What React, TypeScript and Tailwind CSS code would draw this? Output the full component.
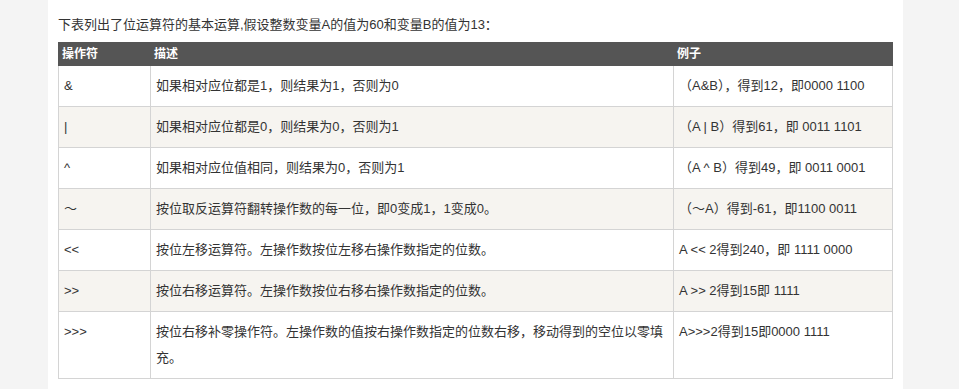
const rows: [string, string, string][] = [
  ["&", "如果相对应位都是1，则结果为1，否则为0", "（A&B），得到12，即0000 1100"],
  ["|", "如果相对应位都是0，则结果为0，否则为1", "（A | B）得到61，即 0011 1101"],
  ["^", "如果相对应位值相同，则结果为0，否则为1", "（A ^ B）得到49，即 0011 0001"],
  ["〜", "按位取反运算符翻转操作数的每一位，即0变成1，1变成0。", "（〜A）得到-61，即1100 0011"],
  ["<<", "按位左移运算符。左操作数按位左移右操作数指定的位数。", "A << 2得到240，即 1111 0000"],
  [">>", "按位右移运算符。左操作数按位右移右操作数指定的位数。", "A >> 2得到15即 1111"],
  [">>>", "按位右移补零操作符。左操作数的值按右操作数指定的位数右移，移动得到的空位以零填充。", "A>>>2得到15即0000 1111"],
];

export default function App() {
  return (
    <div
      className="flex h-[389px] w-[959px] overflow-hidden bg-[#f4f4f4] text-[#333]"
      style={{ fontFamily: '"Liberation Sans", "Noto Sans CJK SC", sans-serif' }}
    >
      <div className="ml-[48px] w-[855px] bg-white pl-[10px] pt-[12px]">
        <p className="text-[13px] leading-[26px]">
          下表列出了位运算符的基本运算,假设整数变量A的值为60和变量B的值为13：
        </p>
        <table className="mt-[4px] w-[834px] table-fixed border-collapse text-[13px]">
          <colgroup>
            <col className="w-[92px]" />
            <col className="w-[523px]" />
            <col className="w-[219px]" />
          </colgroup>
          <thead>
            <tr className="bg-[#555] text-white">
              <th className="border border-[#555] px-[3px] py-[2px] text-left align-top text-[12px] leading-[18px] font-bold">操作符</th>
              <th className="border border-[#555] px-[3px] py-[2px] text-left align-top text-[12px] leading-[18px] font-bold">描述</th>
              <th className="border border-[#555] px-[3px] py-[2px] text-left align-top text-[12px] leading-[18px] font-bold">例子</th>
            </tr>
          </thead>
          <tbody>
            {rows.map((r, i) => (
              <tr key={i} className={i % 2 === 1 ? "bg-[#f6f4f0]" : "bg-white"}>
                {r.map((c, j) => (
                  <td
                    key={j}
                    className="border border-[#d4d4d4] px-[5px] py-[7px] align-top leading-[26px]"
                  >
                    {c}
                  </td>
                ))}
              </tr>
            ))}
          </tbody>
        </table>
      </div>
    </div>
  );
}
